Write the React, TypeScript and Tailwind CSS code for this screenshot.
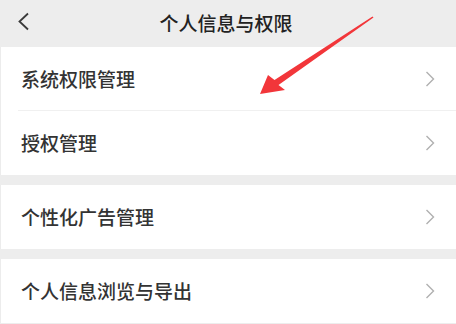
const groups: string[][] = [
  ['系统权限管理', '授权管理'],
  ['个性化广告管理'],
  ['个人信息浏览与导出'],
];

const Chevron = () => (
  <svg width="10" height="16" viewBox="0 0 10 16">
    <path d="M1.5 1 L8.5 8 L1.5 15" fill="none" stroke="#b0b0b0" strokeWidth="1.4" />
  </svg>
);

const Row = ({ label, divider }: { label: string; divider: boolean }) => (
  <div className="h-[64px] flex items-center pl-5 pr-[21px] relative">
    <span className="flex-1 text-[19px] font-medium text-[#333]">{label}</span>
    <Chevron />
    {divider && <div className="absolute left-[17px] right-0 bottom-0 h-px bg-[#f0f0f0]" />}
  </div>
);

export default function App() {
  return (
    <div
      className="relative w-[456px] h-[324px] overflow-hidden bg-[#ededed]"
      style={{ fontFamily: '"Noto Sans CJK SC", "Noto Sans", sans-serif' }}
    >
      {/* Header */}
      <div className="h-[47px] flex items-center relative">
        <svg className="absolute left-[16px] top-[12px]" width="16" height="20" viewBox="0 0 16 20">
          <path d="M12 1.5 L3.5 9.5 L12 17.5" fill="none" stroke="#3a3a3a" strokeWidth="1.8" />
        </svg>
        <div className="flex-1 text-center text-[19px] font-medium text-[#222] pr-[4px]">个人信息与权限</div>
      </div>

      <div className="flex flex-col gap-[10px]">
        {groups.map((g, gi) => (
          <div key={gi} className="bg-white border-l border-[#ececec]">
            {g.map((label, i) => (
              <Row key={label} label={label} divider={i < g.length - 1} />
            ))}
          </div>
        ))}
      </div>

      {/* Red annotation arrow */}
      <svg className="absolute left-0 top-0 pointer-events-none" width="456" height="324" viewBox="0 0 456 324">
        <polygon
          points="260,94 285,90 278.5,85 373.5,17.5 372.5,16.5 274.5,80 268,75"
          fill="#f2363a"
        />
      </svg>
    </div>
  );
}
